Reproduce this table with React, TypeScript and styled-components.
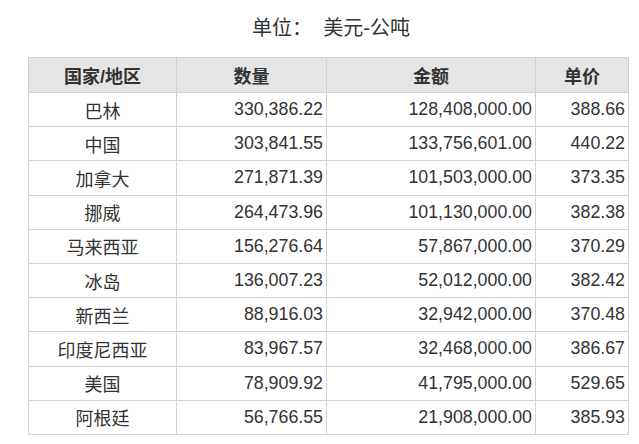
import React from "react";
import styled, { createGlobalStyle } from "styled-components";

const Global = createGlobalStyle`
  html, body { margin: 0; padding: 0; background: #ffffff; }
  body { font-family: "Liberation Sans", "Noto Sans CJK SC", sans-serif; color: #333333; }
`;

const Page = styled.div`
  width: 639px;
  height: 444px;
  overflow: hidden;
  display: flex;
  flex-direction: column;
  align-items: flex-start;
`;

const Title = styled.div`
  align-self: stretch;
  box-sizing: border-box;
  padding: 17px 0 0 23px;
  height: 57px;
  text-align: center;
  font-size: 20px;
  line-height: 22px;
  color: #333333;
  white-space: pre;
`;

const Table = styled.table`
  margin-left: 28px;
  border-collapse: collapse;
  table-layout: fixed;
  width: 597px;
  font-size: 17.8px;
  color: #333333;
`;

const HeadCell = styled.th<{ $w: number }>`
  width: ${(p) => p.$w}px;
  height: 34px;
  padding: 0;
  background: #e5e5e5;
  border: 1px solid #d2d2d2;
  font-weight: bold;
  font-size: 18px;
  text-align: center;
  color: #333333;
`;

const Cell = styled.td<{ $align: "center" | "right" }>`
  height: 33.2px;
  padding: 0 3px 0 0;
  border: 1px solid #d2d2d2;
  text-align: ${(p) => p.$align};
  white-space: nowrap;
  ${(p) => (p.$align === "center" ? "padding: 0; font-size: 18px;" : "")}
`;

const rows: [string, string, string, string][] = [
  ["巴林", "330,386.22", "128,408,000.00", "388.66"],
  ["中国", "303,841.55", "133,756,601.00", "440.22"],
  ["加拿大", "271,871.39", "101,503,000.00", "373.35"],
  ["挪威", "264,473.96", "101,130,000.00", "382.38"],
  ["马来西亚", "156,276.64", "57,867,000.00", "370.29"],
  ["冰岛", "136,007.23", "52,012,000.00", "382.42"],
  ["新西兰", "88,916.03", "32,942,000.00", "370.48"],
  ["印度尼西亚", "83,967.57", "32,468,000.00", "386.67"],
  ["美国", "78,909.92", "41,795,000.00", "529.65"],
  ["阿根廷", "56,766.55", "21,908,000.00", "385.93"],
];

export default function App() {
  return (
    <>
      <Global />
      <Page>
        <Title>{"单位：  美元-公吨"}</Title>
        <Table>
          <thead>
            <tr>
              <HeadCell $w={147}>国家/地区</HeadCell>
              <HeadCell $w={149}>数量</HeadCell>
              <HeadCell $w={208}>金额</HeadCell>
              <HeadCell $w={92}>单价</HeadCell>
            </tr>
          </thead>
          <tbody>
            {rows.map((r) => (
              <tr key={r[0]}>
                <Cell $align="center">{r[0]}</Cell>
                <Cell $align="right">{r[1]}</Cell>
                <Cell $align="right">{r[2]}</Cell>
                <Cell $align="right">{r[3]}</Cell>
              </tr>
            ))}
          </tbody>
        </Table>
      </Page>
    </>
  );
}
